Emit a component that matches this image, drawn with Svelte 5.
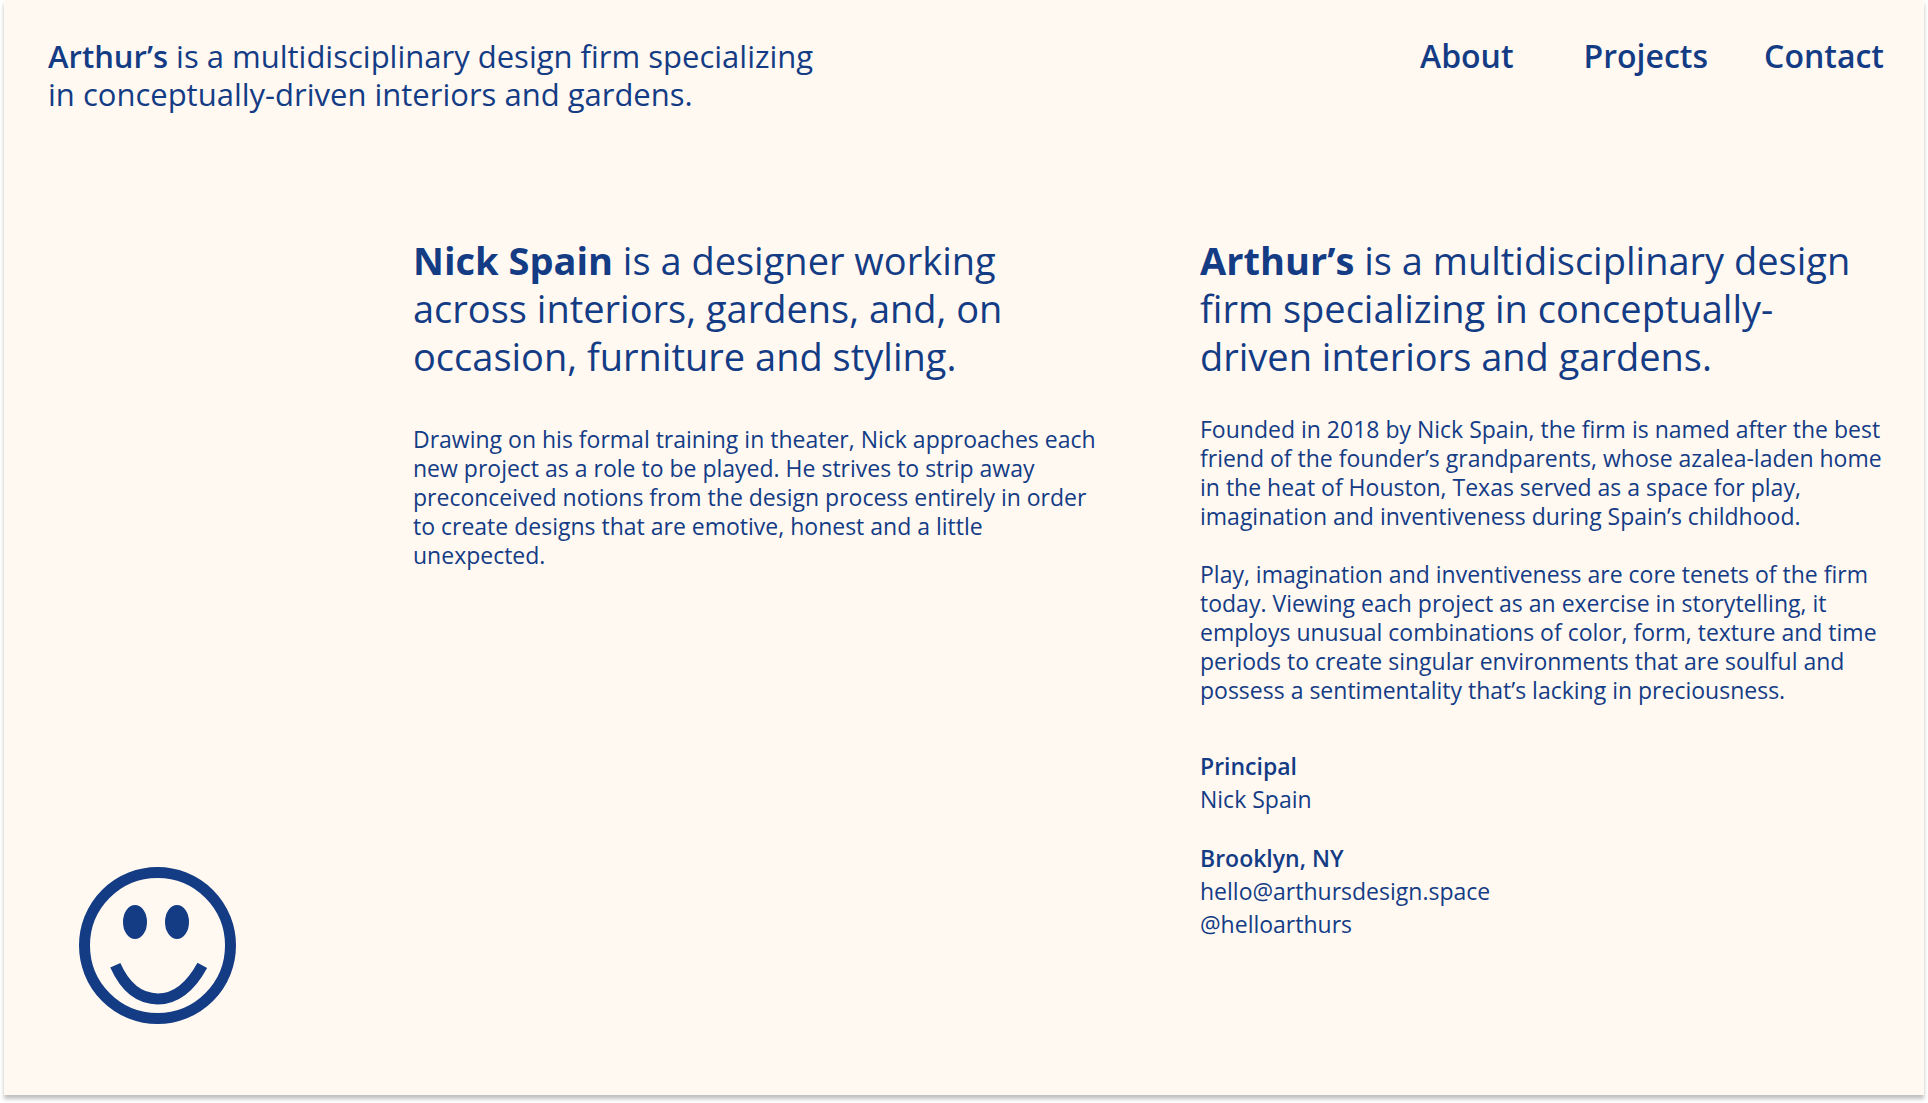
<script>
  const links = [
    { label: 'About', href: '#about' },
    { label: 'Projects', href: '#projects' },
    { label: 'Contact', href: '#contact' }
  ];
</script>

<div class="card">
  <header>
    <p class="tagline">
      <strong>Arthur’s</strong> is a multidisciplinary design firm specializing in conceptually-driven interiors and gardens.
    </p>
    <nav aria-label="Main">
      {#each links as link}
        <a href={link.href}>{link.label}</a>
      {/each}
    </nav>
  </header>

  <main>
    <a class="logo" href="#home" aria-label="Arthur’s home">
      <svg viewBox="0 0 157 157" aria-hidden="true">
        <circle cx="78.5" cy="78.5" r="73" fill="none" stroke="currentColor" stroke-width="11" />
        <ellipse cx="56" cy="55" rx="12" ry="17" fill="currentColor" />
        <ellipse cx="98" cy="55" rx="12" ry="17" fill="currentColor" />
        <path
          d="M36.3 98.3C46 120 60 131.9 78.8 131.9S112 119 123.3 98.3"
          fill="none"
          stroke="currentColor"
          stroke-width="11"
        />
      </svg>
    </a>

    <section class="person">
      <h1><strong>Nick Spain</strong> is a designer working across interiors, gardens, and, on occasion, furniture and styling.</h1>
      <p>
        Drawing on his formal training in theater, Nick approaches each new project as a role to be played. He strives
        to strip away preconceived notions from the design process entirely in order to create designs that are emotive,
        honest and a little unexpected.
      </p>
    </section>

    <section class="firm">
      <h1><strong>Arthur’s</strong> is a multidisciplinary design firm specializing in conceptually-driven interiors and gardens.</h1>
      <p>
        Founded in 2018 by Nick Spain, the firm is named after the best friend of the founder’s grandparents, whose
        azalea-laden home in the heat of Houston, Texas served as a space for play, imagination and inventiveness during
        Spain’s childhood.
      </p>
      <p>
        Play, imagination and inventiveness are core tenets of the firm today. Viewing each project as an exercise in
        storytelling, it employs unusual combinations of color, form, texture and time periods to create singular
        environments that are soulful and possess a sentimentality that’s lacking in preciousness.
      </p>
      <dl>
        <div>
          <dt>Principal</dt>
          <dd>Nick Spain</dd>
        </div>
        <div>
          <dt>Brooklyn, NY</dt>
          <dd><a href="mailto:hello@arthursdesign.space">hello@arthursdesign.space</a></dd>
          <dd><a href="#helloarthurs">@helloarthurs</a></dd>
        </div>
      </dl>
    </section>
  </main>
</div>

<style>
  :global(body) {
    margin: 0;
    background: #fff;
  }

  .card {
    box-sizing: border-box;
    display: flex;
    flex-direction: column;
    min-height: calc(100vh - 8px);
    margin: 0 4px 8px;
    padding: 37px 40px 71px 44px;
    background: #fff9f2;
    box-shadow: 0 4px 4px rgba(0, 0, 0, 0.25);
    color: #143c85;
    font-family: 'Open Sans', 'Noto Sans', sans-serif;
    font-size: 23px;
    line-height: 29px;
  }

  h1,
  p,
  dl,
  dd {
    margin: 0;
  }

  strong,
  dt {
    font-weight: 600;
  }

  h1 strong {
    font-weight: 700;
  }

  a {
    color: inherit;
    text-decoration: none;
  }

  header {
    display: flex;
    justify-content: space-between;
    font-size: 31px;
    line-height: 38px;
  }

  .tagline {
    max-width: 780px;
  }

  nav {
    display: flex;
    gap: 56px;
    font-size: 32px;
    font-weight: 600;
  }

  nav a:first-child {
    margin-right: 14px;
  }

  main {
    flex: 1;
    display: grid;
    grid-template-columns: 262fr 684fr 684fr;
    column-gap: 103px;
    margin-top: 123px;
  }

  .logo {
    align-self: end;
    padding-left: 31px;
  }

  .logo svg {
    display: block;
    width: 157px;
  }

  h1 {
    font-size: 38px;
    font-weight: 400;
    line-height: 48px;
  }

  .person h1 {
    margin-bottom: 45px;
  }

  .firm h1 {
    margin-bottom: 35px;
  }

  p + p {
    margin-top: 29px;
  }

  dl {
    display: grid;
    gap: 26px;
    margin-top: 45px;
    line-height: 33px;
  }
</style>
